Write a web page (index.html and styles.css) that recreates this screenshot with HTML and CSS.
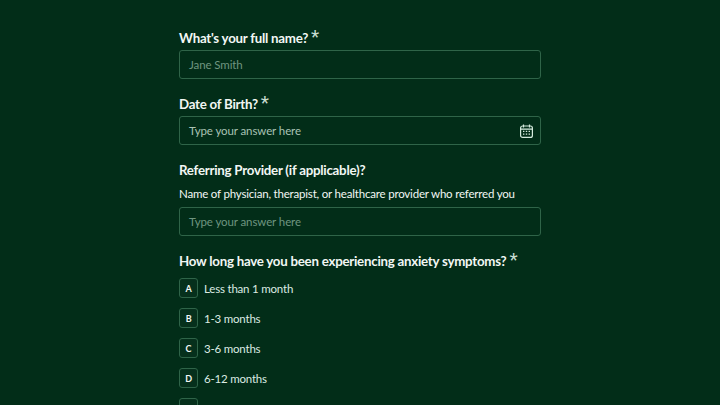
FILE: index.html
```html
<!DOCTYPE html>
<html lang="en">
<head>
    <meta charset="UTF-8">
    <meta name="viewport" content="width=device-width, initial-scale=1.0">
    <title>Intake Form</title>
    <link rel="stylesheet" href="styles.css">
</head>
<body>
    <form class="form">
        <div class="field">
            <label class="question">What's your full name? <span class="star">*</span></label>
            <div class="input dim">Jane Smith</div>
        </div>
        <div class="field">
            <label class="question">Date of Birth? <span class="star">*</span></label>
            <div class="input">
                <span>Type your answer here</span>
                <svg class="calendar" width="13" height="14" viewBox="0 0 13 14" fill="none" stroke="#d5eadd" stroke-width="1.2">
                    <rect x=".6" y="2" width="11.8" height="11.4" rx="2"></rect>
                    <path d="M.6 5.2h11.8M3.5 .5v3M9.5 .5v3"></path>
                    <path d="M3 7.4h1.4M5.8 7.4h1.4M8.6 7.4h1.4M3 10.2h1.4M5.8 10.2h1.4M8.6 10.2h1.4"></path>
                </svg>
            </div>
        </div>
        <div class="field">
            <label class="question">Referring Provider (if applicable)?</label>
            <p class="hint">Name of physician, therapist, or healthcare provider who referred you</p>
            <div class="input dim">Type your answer here</div>
        </div>
        <div class="field">
            <label class="question">How long have you been experiencing anxiety symptoms? <span class="star">*</span></label>
            <div class="choices">
                <div class="choice"><span class="key">A</span>Less than 1 month</div>
                <div class="choice"><span class="key">B</span>1-3 months</div>
                <div class="choice"><span class="key">C</span>3-6 months</div>
                <div class="choice"><span class="key">D</span>6-12 months</div>
                <div class="choice"><span class="key">E</span>1-2 years</div>
            </div>
        </div>
    </form>
</body>
</html>
```

FILE: styles.css
```css
html, body {
    height: 405px;
    overflow: hidden;
}
body {
    margin: 0;
    background-color: #022d18;
    color: #f2f7f4;
    font-family: Lato, sans-serif;
}
.form {
    width: 362px;
    margin: 0 auto;
    padding-top: 27px;
    display: flex;
    flex-direction: column;
    gap: 14px;
}
.question {
    display: block;
    height: 22px;
    margin-bottom: 1px;
    line-height: 22px;
    font-size: 13.3px;
    font-weight: 700;
    letter-spacing: -0.25px;
    white-space: nowrap;
}
.star {
    font-family: Roboto, sans-serif;
    font-size: 19px;
    font-weight: 400;
    line-height: 14px;
    color: #c8dcd0;
}
.hint {
    margin: 4px 0;
    font-size: 11.5px;
    letter-spacing: -0.19px;
    line-height: 18px;
    white-space: nowrap;
}
.input {
    box-sizing: border-box;
    height: 29px;
    padding: 0 7px 0 9px;
    display: flex;
    align-items: center;
    justify-content: space-between;
    border: 1px solid #2f6448;
    border-radius: 3px;
    font-size: 11.5px;
    letter-spacing: -0.1px;
    color: #a9c2b4;
}
.dim {
    color: #6f9580;
}
.choices {
    margin-top: 6px;
    display: flex;
    flex-direction: column;
    gap: 10px;
}
.choice {
    height: 20px;
    display: flex;
    align-items: center;
    gap: 5px;
    font-size: 11.5px;
    letter-spacing: -0.2px;
    color: #dcebe3;
}
.key {
    box-sizing: border-box;
    width: 19px;
    height: 20px;
    margin-right: 1px;
    display: flex;
    align-items: center;
    justify-content: center;
    border: 1px solid #2f6448;
    border-radius: 3px;
    background-color: #06301c;
    font-size: 9px;
    font-weight: 700;
    color: #f2f7f4;
}
```
